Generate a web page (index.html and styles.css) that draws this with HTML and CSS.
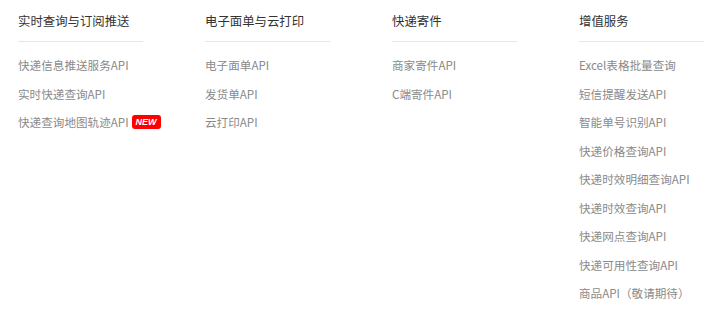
FILE: index.html
```html
<!DOCTYPE html>
<html lang="zh-CN">
<head>
	<meta charset="UTF-8">
	<title>API 产品</title>
	<link rel="stylesheet" href="styles.css">
</head>
<body>
<div class="menu">
	<div class="col">
		<h3>实时查询与订阅推送</h3>
		<ul>
			<li><a href="#">快递信息推送服务API</a></li>
			<li><a href="#">实时快递查询API</a></li>
			<li><a href="#">快递查询地图轨迹API</a><span class="new">NEW</span></li>
		</ul>
	</div>
	<div class="col">
		<h3>电子面单与云打印</h3>
		<ul>
			<li><a href="#">电子面单API</a></li>
			<li><a href="#">发货单API</a></li>
			<li><a href="#">云打印API</a></li>
		</ul>
	</div>
	<div class="col">
		<h3>快递寄件</h3>
		<ul>
			<li><a href="#">商家寄件API</a></li>
			<li><a href="#">C端寄件API</a></li>
		</ul>
	</div>
	<div class="col">
		<h3>增值服务</h3>
		<ul>
			<li><a href="#">Excel表格批量查询</a></li>
			<li><a href="#">短信提醒发送API</a></li>
			<li><a href="#">智能单号识别API</a></li>
			<li><a href="#">快递价格查询API</a></li>
			<li><a href="#">快递时效明细查询API</a></li>
			<li><a href="#">快递时效查询API</a></li>
			<li><a href="#">快递网点查询API</a></li>
			<li><a href="#">快递可用性查询API</a></li>
			<li><a href="#">商品API（敬请期待）</a></li>
		</ul>
	</div>
</div>
</body>
</html>
```

FILE: styles.css
```css
body,h3,ul,li {margin:0; padding:0;}
body {background:#fff; font-family:"Noto Sans CJK SC","Liberation Sans",sans-serif;}

.menu {display:flex; padding:10px 0 0 18px;}
.col {flex:none; width:125px; margin-right:62px;}

h3 {font-size:12.4px; font-weight:400; color:#333; line-height:22px; padding-bottom:9px; border-bottom:1px solid #e6e6e6;}

ul {padding-top:12px;}
li {list-style:none; height:28.5px; line-height:22px; font-size:11.6px; white-space:nowrap; display:flex; align-items:flex-start;}
li a {color:#8a8a8a; text-decoration:none;}

.new {display:inline-block; margin:4px 0 0 3px; height:14px; padding:0 4px; background:#f00; border-radius:3px; color:#fff; font:italic 700 9px/14px "Liberation Sans",Arial,sans-serif;}
```
